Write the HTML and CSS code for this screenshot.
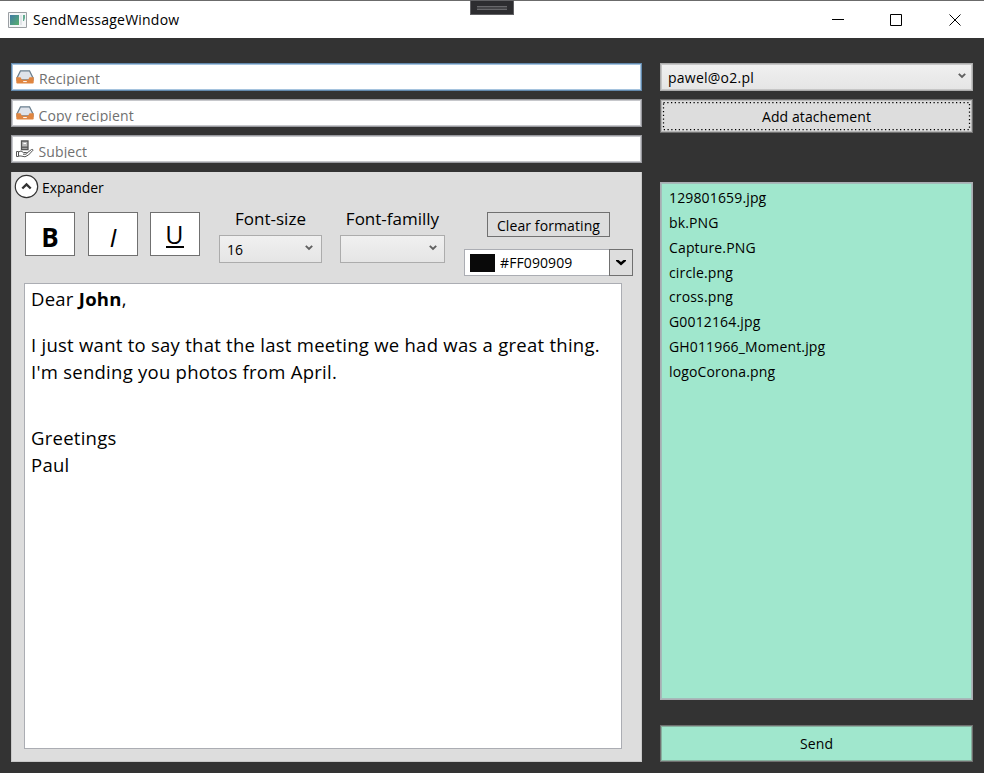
FILE: index.html
```html
<!DOCTYPE html>
<html lang="en">
<head>
<meta charset="utf-8">
<title>SendMessageWindow</title>
<link rel="stylesheet" href="styles.css">
</head>
<body>
<svg width="0" height="0" class="defs">
  <symbol id="tray" viewBox="0 0 18 14">
    <path d="M4.5 .8h9L17 8v2H1V8z" fill="#dfe3ea" stroke="#6b7f8e" stroke-width="1.3"/>
    <path d="M.3 7.3h4.2l1.4 2.5h6.2l1.4-2.5h4.2v5.2q0 1-1 1H1.300q-1 0-1-1z" fill="#e0853f"/>
    <path d="M7.200 11.600h3.600" stroke="#fff" stroke-width="1"/>
  </symbol>
  <symbol id="chev" viewBox="0 0 8 6"><path d="M.8 .8 4 4 7.200 .8" fill="none" stroke="#606060" stroke-width="1.900"/></symbol>
</svg>
<div class="window">
  <header class="titlebar">
    <svg class="app-icon" width="19" height="16" viewBox="0 0 19 16">
      <defs><linearGradient id="g" x1="0" y1="0" x2="1" y2="1"><stop offset="0" stop-color="#3f7aa5"/><stop offset="1" stop-color="#58b06c"/></linearGradient></defs>
      <path d="M.5.5h18v15H.5z" fill="#f4f6f7" stroke="#9b9fa3"/>
      <path d="M2 3h9v10H2z" fill="url(#g)"/><path d="M12 3h2v10h-2z" fill="#e1e4e8"/><path d="M15 3h2v3l-1 3h-1z" fill="#63ad91"/>
    </svg>
    <h1 class="title">SendMessageWindow</h1>
    <div class="grip"><span class="grip-line"></span></div>
    <svg class="controls" width="130" height="14" viewBox="0 0 130 14" fill="none" stroke="#000">
      <path d="M0 6.500h12M58.500 1.500h11v11h-11z"/><path d="M117.500 1.500l11 11M128.500 1.500l-11 11"/>
    </svg>
  </header>
  <main class="content">
    <section class="compose">
      <div class="field focused"><svg class="field-icon" width="18" height="14"><use href="#tray"/></svg><span class="hint recipient">Recipient</span></div>
      <div class="field"><svg class="field-icon" width="18" height="14"><use href="#tray"/></svg><span class="hint copy">Copy recipient</span></div>
      <div class="field"><svg class="field-icon subject-icon" width="18" height="18" viewBox="0 0 18 18" fill="none" stroke="#555">
        <path d="M5.500 1h6.500v8.500H5.500z" fill="#bbb" stroke-width="1.300"/><path d="M6 7.200h6" stroke-width="1.300"/><path d="M7.500 3.500h2.500" stroke="#fff"/>
        <path d="M.5 11.500h2v5h-2zM2.500 12l2.500-1 2.500 1.500h3q1 1-.5 1.700H7M11 13l4.500-3.500q1.500-.5 1.500.7L12.500 15 9 16.800 5 16 2.500 16"/>
      </svg><span class="hint subject">Subject</span></div>
      <div class="expander">
        <div class="expander-head">
          <svg width="25" height="25" viewBox="0 0 25 25" fill="none"><circle cx="12.500" cy="12.500" r="11.200" fill="#fff" stroke="#333" stroke-width="1.200"/><path d="M8.300 14.500l4.200-4 4.200 4" stroke="#333" stroke-width="2.400"/></svg>
          <span class="expander-label">Expander</span>
        </div>
        <div class="toolbar">
          <div class="format"><button class="tool bold"><span>B</span></button><button class="tool italic"><span>I</span></button><button class="tool under"><span>U</span></button></div>
          <div class="pick size"><span class="pick-label">Font-size</span><div class="combo"><span>16</span><svg width="8" height="6"><use href="#chev"/></svg></div></div>
          <div class="pick family"><span class="pick-label">Font-familly</span><div class="combo"><span></span><svg width="8" height="6"><use href="#chev"/></svg></div></div>
          <div class="color-group">
            <button class="clear"><span>Clear formating</span></button>
            <div class="color"><span class="swatch"></span><span class="hex">#FF090909</span><span class="drop"><svg width="10" height="6" viewBox="0 0 10 6"><path d="M0 0h2.500L5 2 7.500 0H10v1L5 5.500 0 1z"/></svg></span></div>
          </div>
        </div>
        <article class="editor">
          <p class="greet">Dear <b>John</b>,</p>
          <p class="text">I just want to say that the last meeting we had was a great thing.<br>I'm sending you photos from April.</p>
          <p class="sign">Greetings<br>Paul</p>
        </article>
      </div>
    </section>
    <aside class="side">
      <div class="combo account"><span>pawel@o2.pl</span><svg width="8" height="6"><use href="#chev"/></svg></div>
      <button class="attach"><svg class="focus" width="311" height="32"><rect x="2.500" y="2.500" width="306" height="27" fill="none" stroke="#000" stroke-width="1.250" stroke-dasharray="1.250 2.500"/></svg><span>Add atachement</span></button>
      <ul class="files">
        <li>129801659.jpg</li><li>bk.PNG</li><li>Capture.PNG</li><li>circle.png</li><li>cross.png</li><li>G0012164.jpg</li><li>GH011966_Moment.jpg</li><li>logoCorona.png</li>
      </ul>
      <button class="send">Send</button>
    </aside>
  </main>
</div>
</body>
</html>
```
FILE: styles.css
```css
* { box-sizing: border-box; }
body { margin: 0; font: 14px/20px "Open Sans", "Noto Sans", sans-serif; color: #000; letter-spacing: 0.1px; }
.defs { display: block; position: absolute; }
button { font: inherit; letter-spacing: inherit; color: inherit; padding: 0; border-radius: 0; }
p, ul, h1 { margin: 0; padding: 0; }
.window { width: 984px; height: 773px; background: #333; display: flex; flex-direction: column; overflow: hidden; white-space: nowrap; }
.titlebar { position: relative; height: 38px; background: #fff; border-top: 1px solid #6b6b6b; display: flex; align-items: center; padding: 0 22px 0 8px; }
.title { font-size: 14px; font-weight: 400; margin-left: 6px; flex: 1; letter-spacing: 0.22px; }
.grip { position: absolute; left: 470px; top: -1px; width: 44px; height: 15px; background: #2d2d30; border: 1px solid #606063; display: flex; align-items: center; justify-content: center; }
.grip-line { width: 30px; height: 4px; border: solid #68686b; border-width: 1px 0; background: #454548; }
.content { flex: 1; display: grid; grid-template-columns: 631px 313px; column-gap: 18px; padding: 25px 11px 11px; }
.compose { display: flex; flex-direction: column; gap: 8px; }
.field { height: 28px; background: #fff; border: 1px solid #98999e; box-shadow: inset 0 0 0 1px #c6c7cb; display: flex; padding: 1px 4px; }
.focused { border-color: #6289ad; box-shadow: inset 0 0 0 1px #a5c3de; }
.field-icon { margin-top: 5px; }
.subject-icon { margin-top: 3px; }
.hint { color: #707070; margin-left: 5px; height: 21px; line-height: 27px; overflow: hidden; }
.copy, .subject { line-height: 29px; margin-left: 4.500px; }
.expander { height: 590px; margin-top: 1px; background: #ddd; border: 1px solid #c8c8c8; border-top: 0; }
.expander-head { height: 40px; padding: 2px 0 0 2px; display: flex; align-items: flex-start; }
.expander-head svg { margin-left: -.5px; }
.expander-label { margin: 4px 0 0 3.500px; letter-spacing: -0.05px; }
.toolbar { height: 71px; padding-left: 13px; display: flex; align-items: flex-start; }
.format { display: flex; gap: 13px; width: 194px; }
.tool { width: 50px; height: 44px; background: #fff; border: 1px solid #707070; font-size: 26px; line-height: 44px; text-align: center; flex: none; }
.tool span { display: block; height: 42px; line-height: 48px; }
.bold { font-weight: 700; }
.italic { font-style: italic; }
.under { font-size: 25px; margin-left: -1px; }
.under span { width: 18px; height: 35px; margin: -7px auto 0; line-height: 42px; border-bottom: 2px solid #000; text-indent: -1px; }
.pick { display: flex; flex-direction: column; align-items: center; }
.pick-label { height: 23px; line-height: 14px; font-size: 17px; letter-spacing: 0; }
.size { width: 103px; }
.family { width: 105px; margin-left: 18px; }
.combo { width: 100%; height: 28px; border: 1px solid #acacac; background: linear-gradient(#f0f0f0, #e5e5e5); display: flex; align-items: center; justify-content: space-between; padding: 0 8px 0 7px; }
.family .combo { padding-right: 7px; }
.combo span { padding-top: 1px; }
.combo svg { margin-top: -3px; }
.color-group { width: 169px; margin-left: 19px; }
.clear { display: block; width: 123px; height: 25px; margin-left: 23px; border: 1px solid #707070; background: #ddd; padding-top: 2px; }
.color { margin-top: 12px; height: 27px; border: 1px solid #abadb3; background: #fff; display: flex; align-items: center; padding-left: 5px; }
.swatch { width: 25px; height: 18px; background: #090909; }
.hex { margin: 1px 0 0 5px; flex: 1; }
.drop { width: 24px; height: 27px; margin-right: -1px; border: 1px solid #707070; background: #ddd; display: flex; align-items: center; justify-content: center; }
.editor { width: 598px; height: 466px; margin-left: 12px; background: #fff; border: 1px solid #abadb3; padding: 1px 6px; font-size: 18.500px; line-height: 27px; letter-spacing: 0.26px; }
.text { margin-top: 19px; }
.sign { margin-top: 39px; }
.side { display: flex; flex-direction: column; }
.account { border-color: #acacac; box-shadow: inset 0 0 0 1px #c6c6c6; padding: 0 6px 0 7px; letter-spacing: 0.24px; }
.attach { position: relative; height: 34px; margin-top: 8px; border: 1px solid #707070; box-shadow: inset 0 0 0 1px #b4b4b4; background: #ddd; padding-top: 2px; }
.focus { position: absolute; left: 0; top: 0; }
.files { list-style: none; height: 518px; margin-top: 49px; background: #a0e7cd; border: 1px solid #abadb3; box-shadow: inset 0 0 0 1px #a4bbb9; padding: 3px 8px; line-height: 24.850px; letter-spacing: 0.15px; }
.send { height: 37px; margin-top: 25px; border: 1px solid #707070; box-shadow: inset 0 0 0 1px #88b09f; background: #a0e7cd; }
```
